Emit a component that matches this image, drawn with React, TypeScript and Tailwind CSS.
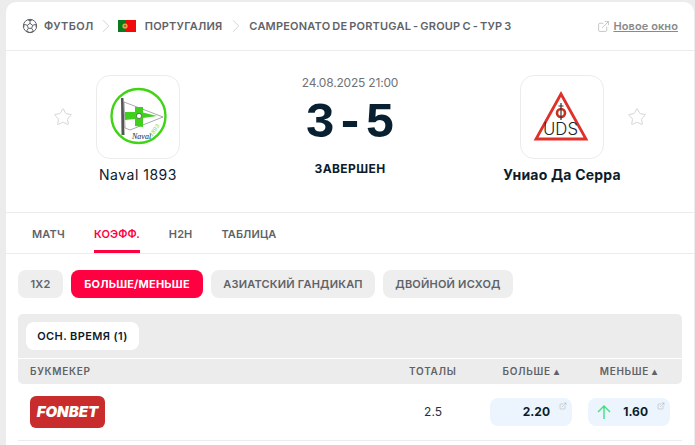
import { ChevronRight, ExternalLink, Star } from 'lucide-react';

const fontStack = "font-['Inter',sans-serif]";

function SoccerBall() {
  return (
    <svg viewBox="0 0 24 24" className="h-[16px] w-[16px]" fill="none" stroke="#5f6368" strokeWidth="1.5">
      <circle cx="12" cy="12" r="10" />
      <path d="M12 8l4 3-1.5 4.5h-5L8 11z" />
      <path d="M12 8V3.500M16 11l4.500-1.500M14.500 15.500l2.500 4M9.500 15.500l-2.500 4M8 11L3.500 9.500M8.500 2.800L12 4l3.500-1.200M20.800 9l.4 4.500M3.200 9l-.4 4.500M7 20l5 1.800L17 20" />
    </svg>
  );
}

function PortugalFlag() {
  return (
    <svg viewBox="0 0 18 12" className="h-[12px] w-[18px]">
      <rect width="7" height="12" fill="#0a7a1f" />
      <rect x="7" width="11" height="12" fill="#f20a0a" />
      <circle cx="7" cy="6" r="2.600" fill="#e3b23c" />
      <circle cx="7" cy="6" r="1.300" fill="#b85a5a" />
    </svg>
  );
}

function NavalLogo() {
  return (
    <svg viewBox="0 0 60 60" className="h-[60px] w-[60px]">
      <circle cx="30.500" cy="29" r="27" fill="#fff" stroke="#3fd515" strokeWidth="2.400" />
      <path d="M13 11l2.500 0 1 37h-3z" fill="#555" />
      <path d="M16 15L55 30 22 43 17 41z" fill="#fff" stroke="#555" strokeWidth="0.500" />
      <path d="M17 25h10v-5h8v5.500l14 3.500-14 2v9l-8-1v-7l-10 1z" fill="#41cf1f" />
      <circle cx="31" cy="29" r="2.600" fill="#fff" stroke="#333" strokeWidth="0.600" />
      <text x="24" y="52" fontFamily="'Liberation Serif',serif" fontStyle="italic" fontSize="8" fill="#222">Naval</text>
      <text x="0" y="0" transform="translate(44 50) rotate(-55)" fontFamily="'Liberation Sans',sans-serif" fontStyle="italic" fontSize="6" fill="#7cdc5a">1893</text>
    </svg>
  );
}

function UdsLogo() {
  return (
    <svg viewBox="0 0 58 58" className="h-[58px] w-[58px]">
      <path d="M28 6L53 51H3z" fill="#fff" stroke="#e0302a" strokeWidth="2.800" />
      <circle cx="28" cy="25" r="4" fill="none" stroke="#c8301f" strokeWidth="2.600" />
      <path d="M28 15v17M25.500 18h5" stroke="#333" strokeWidth="1.200" />
      <text x="10" y="47" textLength="35" lengthAdjust="spacingAndGlyphs" fontFamily="Inter,sans-serif" fontWeight="300" fontSize="17" fill="#222">UDS</text>
    </svg>
  );
}

function TeamColumn({ name, bold, logo }: { name: string; bold?: boolean; logo: React.ReactNode }) {
  return (
    <div className="flex w-[130px] flex-col items-center">
      <div className="flex h-[84px] w-[84px] items-center justify-center rounded-[14px] border border-[#ececec] bg-white">
        {logo}
      </div>
      <div className={`mt-[6px] whitespace-nowrap text-[14px] leading-[20px] text-[#0d1b2a] ${bold ? 'font-bold tracking-[0.2px]' : 'font-normal tracking-[0.5px]'}`}>
        {name}
      </div>
    </div>
  );
}

export default function App() {
  return (
    <div className={`${fontStack} h-[445px] w-[695px] overflow-hidden bg-[#ececec] pl-[6px] pr-px pt-[2px]`}>
      <div className="h-full overflow-hidden rounded-t-[10px] bg-white">
        {/* breadcrumbs */}
        <div className="flex h-[49px] items-center border-b border-[#ececec] pl-[16px] pr-[16px] text-[11px] font-semibold tracking-[0.2px] text-[#5f6368]">
          <SoccerBall />
          <span className="ml-[6px] tracking-[0.4px]">ФУТБОЛ</span>
          <ChevronRight className="mx-px h-[22px] w-[22px] text-[#c4c4c4]" strokeWidth={0.8} />
          <PortugalFlag />
          <span className="ml-[9px]">ПОРТУГАЛИЯ</span>
          <ChevronRight className="ml-[3px] mr-[2px] h-[22px] w-[22px] text-[#c4c4c4]" strokeWidth={0.8} />
          <span className="[word-spacing:-1px]">CAMPEONATO DE PORTUGAL - GROUP C - ТУР 3</span>
          <ExternalLink className="ml-auto h-[13px] w-[13px] text-[#a8a8a8]" strokeWidth={1.2} />
          <span className="ml-[3px] tracking-[0.1px] text-[#8a8a8a] underline">Новое окно</span>
        </div>

        {/* match header */}
        <div className="flex h-[162px] border-b border-[#ececec] pt-[24px]">
          <div className="flex w-[67px] justify-end pt-[32px]">
            <Star className="h-[20px] w-[20px] text-[#d4d4d4]" strokeWidth={1.2} />
          </div>
          <TeamColumn name="Naval 1893" logo={<NavalLogo />} />
          <div className="flex w-[294px] flex-col items-center">
            <div className="text-[12px] leading-[16px] tracking-[-0.2px] text-[#6f7378]">24.08.2025 21:00</div>
            <div className="mt-[11px] flex h-[44px] items-center font-['Liberation_Mono',monospace] text-[50px] font-bold leading-[44px] text-[#08202f]">
              <span>3</span>
              <span>-</span>
              <span>5</span>
            </div>
            <div className="mt-[15px] text-[12px] font-bold leading-[16px] tracking-[0.4px] text-[#0d1b2a]">ЗАВЕРШЕН</div>
          </div>
          <TeamColumn name="Униао Да Серра" bold logo={<UdsLogo />} />
          <div className="pt-[32px]">
            <Star className="h-[20px] w-[20px] text-[#d4d4d4]" strokeWidth={1.2} />
          </div>
        </div>

        {/* tabs */}
        <div className="flex h-[41px] gap-[29px] border-b border-[#ececec] pl-[26px] text-[11px] font-semibold tracking-[0.1px] text-[#5f6368]">
          <div className="pt-[13px] tracking-[0.2px]">МАТЧ</div>
          <div className="border-b-[3px] border-[#ff0040] pt-[13px] text-[#ff0040]">КОЭФФ.</div>
          <div className="pt-[13px]">H2H</div>
          <div className="pt-[13px]">ТАБЛИЦА</div>
        </div>

        {/* market pills */}
        <div className="flex gap-[8px] px-[12px] pt-[16px] text-[11px] font-semibold tracking-[0.2px]">
          <div className="flex h-[28px] w-[45px] items-center justify-center rounded-[8px] bg-[#eeeeee] text-[#5f6368]">1X2</div>
          <div className="flex h-[28px] w-[132px] items-center justify-center rounded-[8px] bg-[#ff0040] font-bold text-white">БОЛЬШЕ/МЕНЬШЕ</div>
          <div className="flex h-[28px] w-[164px] items-center justify-center rounded-[8px] bg-[#eeeeee] text-[#5f6368]">АЗИАТСКИЙ ГАНДИКАП</div>
          <div className="flex h-[28px] w-[130px] items-center justify-center rounded-[8px] bg-[#eeeeee] text-[#5f6368]">ДВОЙНОЙ ИСХОД</div>
        </div>

        {/* odds table */}
        <div className="mx-[12px] mt-[16px] overflow-hidden rounded-[5px] bg-[#ececec]">
          <div className="h-[45px] border-b border-white pl-[8px] pt-[8px]">
            <div className="flex h-[28px] w-[113px] items-center justify-center rounded-[8px] bg-white text-[11px] font-semibold tracking-[0.4px] text-[#0d1b2a]">
              ОСН. ВРЕМЯ (1)
            </div>
          </div>
          <div className="flex h-[25px] items-center text-[10px] font-semibold tracking-[0.7px] text-[#5f6368]">
            <span className="ml-[12px]">БУКМЕКЕР</span>
            <span className="ml-auto mr-[46px]">ТОТАЛЫ</span>
            <span className="mr-[40px]">БОЛЬШЕ ▴</span>
            <span className="mr-[24px]">МЕНЬШЕ ▴</span>
          </div>
        </div>
        <div className="mx-[12px] flex h-[57px] items-center border-b border-[#ececec]">
          <div className="ml-[12px] flex h-[32px] w-[75px] items-center justify-center rounded-[6px] bg-[#c92c2c] text-[15px] font-black italic text-white">
            FONBET
          </div>
          <span className="ml-auto mr-[48px] text-[12px] text-[#2a2f36]">2.5</span>
          <div className="relative mr-[16px] flex h-[28px] w-[82px] items-center justify-end rounded-[8px] bg-[#ecf5fe] pr-[22px] text-[12px] font-bold text-[#0d1b2a]">
            2.20
            <ExternalLink className="absolute right-[5px] top-[4px] h-[8px] w-[8px] text-[#a8a8a8]" strokeWidth={1.5} />
          </div>
          <div className="relative mr-[12px] flex h-[28px] w-[82px] items-center justify-end rounded-[8px] bg-[#ecf5fe] pr-[22px] text-[12px] font-bold text-[#0d1b2a]">
            <svg viewBox="0 0 14 14" className="absolute left-[9px] top-[7px] h-[14px] w-[14px]" fill="none" stroke="#3ee07f" strokeWidth="1.400">
              <path d="M7 14V1M1 7l6-6 6 6" />
            </svg>
            1.60
            <ExternalLink className="absolute right-[5px] top-[4px] h-[8px] w-[8px] text-[#a8a8a8]" strokeWidth={1.5} />
          </div>
        </div>
      </div>
    </div>
  );
}
